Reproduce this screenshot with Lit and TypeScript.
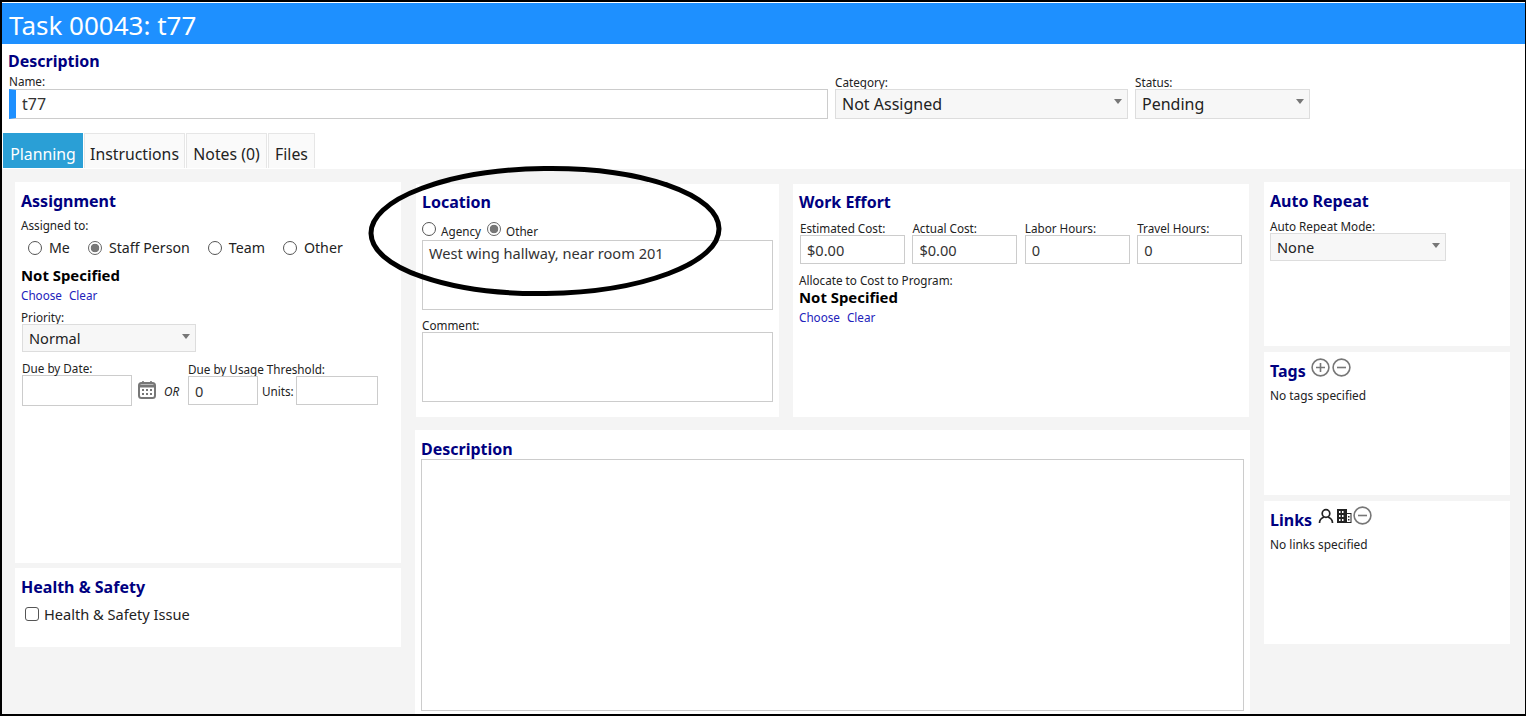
import { css, html, LitElement, svg } from 'lit';
import { customElement } from 'lit/decorators.js';

const plusIcon = svg`<circle cx="9.5" cy="9.5" r="8.4" fill="none" stroke="#777" stroke-width="1.6"/><path d="M5 9.5h9M9.5 5v9" stroke="#777" stroke-width="1.6"/>`;
const minusIcon = svg`<circle cx="9.5" cy="9.5" r="8.4" fill="none" stroke="#777" stroke-width="1.6"/><path d="M5 9.5h9" stroke="#777" stroke-width="1.6"/>`;

@customElement('app-root')
export class AppRoot extends LitElement {
  static styles = css`
    :host {
      display: block;
      font-family: 'Noto Sans', 'Open Sans', sans-serif;
      color: #222;
    }

    * {
      box-sizing: border-box;
    }

    .frame {
      position: relative;
      display: flex;
      flex-direction: column;
      width: 1526px;
      height: 716px;
      overflow: hidden;
      border: solid #000;
      border-width: 2px 1px 2px 2px;
      padding-top: 1px;
      background: #fff;
    }

    .title {
      flex: none;
      height: 41px;
      padding-left: 7px;
      background: #1e90ff;
      color: #fff;
      font-size: 26px;
      line-height: 44px;
    }

    h2 {
      margin: 0;
      color: #000080;
      font-size: 16px;
      font-weight: 700;
      line-height: 22px;
    }

    label {
      display: block;
      font-size: 11.7px;
      line-height: 14px;
    }

    .top {
      flex: none;
      height: 89px;
      padding: 6px 0 0 6px;
    }

    .top-row {
      display: flex;
      margin-top: 3px;
    }

    .top-row > div {
      margin-right: 7px;
    }

    .name {
      padding-left: 1px;
    }

    .name label {
      margin: -1px 0 1px;
    }

    .name input[type='text'] {
      width: 819px;
      border-left: 7px solid #1e90ff;
      padding-left: 6px;
      font-size: 16px;
    }

    .category .select {
      width: 293px;
    }

    .status .select {
      width: 175px;
    }

    .top-row .select {
      font-size: 16px;
    }

    input[type='text'],
    textarea {
      display: block;
      height: 30px;
      border: 1px solid #ccc;
      border-radius: 0;
      outline: none;
      padding: 0 6px;
      background: #fff;
      color: #333;
      font: inherit;
      font-size: 14.6px;
    }

    textarea {
      width: 100%;
      height: 70px;
      resize: none;
      line-height: 20px;
      padding-top: 2px;
    }

    .select {
      position: relative;
      height: 30px;
      border: 1px solid #ddd;
      padding-left: 6px;
      background: #f7f7f7;
      font-size: 14.6px;
      line-height: 28px;
    }

    .select.short {
      height: 28px;
      line-height: 26px;
    }

    .select::after {
      content: '';
      position: absolute;
      top: 9px;
      right: 5px;
      border: 4px solid transparent;
      border-top: 5px solid #777;
      border-bottom: 0;
    }

    .tabs {
      flex: none;
      display: flex;
      gap: 1px;
      height: 36px;
      padding: 0 0 1px 1px;
    }

    .tab {
      height: 35px;
      border: 1px solid #e6e6e6;
      border-bottom: 0;
      background: #fafafa;
      font-size: 15.8px;
      line-height: 41px;
      text-align: center;
    }

    .tab:nth-child(1) {
      width: 80px;
    }

    .tab:nth-child(2) {
      width: 101px;
    }

    .tab:nth-child(3) {
      width: 81px;
    }

    .tab:nth-child(4) {
      width: 47px;
    }

    .tab.active {
      border-color: #2a9fd6;
      background: #2a9fd6;
      color: #fff;
    }

    .main {
      flex: 1;
      display: grid;
      grid-template-columns: 386px 835px 246px;
      column-gap: 14px;
      padding: 13px 0 0 13px;
      background: #f4f4f4;
      min-height: 0;
    }

    .col {
      display: flex;
      flex-direction: column;
    }

    .panel {
      background: #fff;
      padding: 8px 6px;
    }

    .assignment {
      height: 381px;
    }

    .assigned-label {
      margin-top: 6px;
    }

    .health {
      height: 79px;
      margin-top: 5px;
    }

    .health .option {
      gap: 5px;
      margin: 6px 0 0 4px;
      font-size: 14.6px;
    }

    .middle {
      padding-top: 2px;
    }

    .middle-top {
      display: grid;
      grid-template-columns: 363px 456px;
      column-gap: 14px;
      margin-left: 1px;
    }

    .location,
    .effort {
      height: 233px;
      padding: 7px 6px;
    }

    .description {
      height: 292px;
      margin-top: 13px;
      padding: 8px 6px;
    }

    .description h2 {
      margin-bottom: -1px;
    }

    .description textarea {
      height: 252px;
    }

    .repeat {
      height: 164px;
    }

    .repeat label {
      margin-top: 7px;
    }

    .repeat .select {
      width: 176px;
    }

    .tags,
    .links {
      height: 143px;
      margin-top: 6px;
    }

    .options {
      display: flex;
      align-items: center;
      height: 22px;
      margin-top: 5px;
    }

    .option {
      display: flex;
      align-items: center;
      gap: 7px;
      margin: 0 18px 0 7px;
      font-size: 14.2px;
      line-height: 20px;
    }

    .option + .option {
      margin-left: 0;
    }

    input[type='radio'],
    input[type='checkbox'] {
      appearance: none;
      flex: none;
      width: 14px;
      height: 14px;
      margin: 0;
      border: 1px solid #555;
      border-radius: 50%;
      background: #fff;
    }

    input[type='radio']:checked {
      border-color: #666;
      background: radial-gradient(circle, #777 0 4px, #fff 4.6px);
    }

    input[type='checkbox'] {
      border-radius: 3px;
    }

    .loc-options {
      display: flex;
      align-items: center;
      gap: 5px;
      height: 16px;
      margin: 8px 0 3px;
    }

    .loc-options span {
      position: relative;
      top: 2px;
      margin-right: 1px;
      font-size: 11.7px;
    }

    .comment-label {
      margin-top: 8px;
    }

    .strong {
      color: #000;
      font-size: 14.9px;
      font-weight: 700;
      line-height: 20px;
    }

    .assignment .strong {
      margin-top: 6px;
    }

    .links-row {
      display: flex;
      gap: 7px;
      margin-top: 2px;
      color: #2222bb;
      font-size: 11.7px;
      line-height: 16px;
    }

    .priority-label {
      margin-top: 7px;
    }

    .priority {
      width: 174px;
      margin-left: 1px;
    }

    .fields {
      display: grid;
      grid-template-columns: repeat(4, 105px);
      column-gap: 7.4px;
      margin: 8px 0 0 1px;
    }

    .fields input[type='text'] {
      width: 100%;
      height: 29px;
    }

    .allocate-label {
      margin-top: 9px;
    }

    .due {
      display: flex;
      align-items: flex-end;
      margin: 9px 0 0 1px;
    }

    .date input[type='text'] {
      width: 110px;
      height: 31px;
    }

    .calendar {
      flex: none;
      width: 18px;
      height: 18px;
      margin: 0 8px 7px 6px;
    }

    .or {
      width: 24px;
      font-size: 11.7px;
      font-style: italic;
      line-height: 30px;
    }

    .usage {
      margin-bottom: 1px;
    }

    .units {
      display: flex;
      align-items: center;
      gap: 3px;
      font-size: 11.7px;
    }

    .units span {
      margin-right: -1px;
    }

    .units input[type='text'] {
      width: 82px;
      height: 29px;
    }

    .units input.threshold[type='text'] {
      width: 70px;
      margin-right: 1px;
    }

    .head-icons {
      display: flex;
      align-items: flex-start;
      gap: 2px;
    }

    .head-icons h2 {
      margin-right: 3px;
    }

    .head-icons svg {
      display: block;
      margin-top: -2px;
    }

    .links .head-icons h2 {
      margin-right: 4px;
    }

    .links .head-icons svg {
      margin-top: -1px;
    }

    .links .head-icons svg.minus {
      margin: -3px 0 0 -1px;
    }

    .note {
      margin-top: 5px;
      font-size: 11.9px;
      line-height: 16px;
    }

    .circle {
      position: absolute;
      left: 366px;
      top: 161px;
      width: 360px;
      height: 136px;
      overflow: visible;
      pointer-events: none;
    }
  `;

  render() {
    return html`
      <div class="frame">
        <div class="title">Task 00043: t77</div>
        <section class="top">
          <h2>Description</h2>
          <div class="top-row">
            <div class="name">
              <label>Name:</label>
              <input type="text" .value=${'t77'} />
            </div>
            <div class="category">
              <label>Category:</label>
              <div class="select">Not Assigned</div>
            </div>
            <div class="status">
              <label>Status:</label>
              <div class="select">Pending</div>
            </div>
          </div>
        </section>
        <nav class="tabs">
          <div class="tab active">Planning</div>
          <div class="tab">Instructions</div>
          <div class="tab">Notes (0)</div>
          <div class="tab">Files</div>
        </nav>
        <main class="main">
          <div class="col">
            <section class="panel assignment">
              <h2>Assignment</h2>
              <label class="assigned-label">Assigned to:</label>
              <div class="options">
                <div class="option"><input type="radio" />Me</div>
                <div class="option"><input type="radio" checked />Staff Person</div>
                <div class="option"><input type="radio" />Team</div>
                <div class="option"><input type="radio" />Other</div>
              </div>
              <div class="strong">Not Specified</div>
              <div class="links-row"><span>Choose</span><span>Clear</span></div>
              <label class="priority-label">Priority:</label>
              <div class="select short priority">Normal</div>
              <div class="due">
                <div class="date">
                  <label>Due by Date:</label>
                  <input type="text" />
                </div>
                <svg class="calendar" viewBox="0 0 18 18">
                  <rect x="1" y="2" width="16" height="15" rx="2.5" fill="none" stroke="#777" stroke-width="2" />
                  <path d="M1 5h16" stroke="#777" stroke-width="3" />
                  <path d="M5 0v3M13 0v3" stroke="#777" stroke-width="1.6" />
                  <path
                    d="M4 8h2v2H4zM8 8h2v2H8zM12 8h2v2h-2zM4 12h2v2H4zM8 12h2v2H8zM12 12h2v2h-2z"
                    fill="#777"
                  />
                </svg>
                <div class="or">OR</div>
                <div class="usage">
                  <label>Due by Usage Threshold:</label>
                  <div class="units">
                    <input class="threshold" type="text" .value=${'0'} />
                    <span>Units:</span>
                    <input type="text" />
                  </div>
                </div>
              </div>
            </section>
            <section class="panel health">
              <h2>Health &amp; Safety</h2>
              <div class="option"><input type="checkbox" />Health &amp; Safety Issue</div>
            </section>
          </div>
          <div class="col middle">
            <div class="middle-top">
              <section class="panel location">
                <h2>Location</h2>
                <div class="loc-options">
                  <input type="radio" /><span>Agency</span>
                  <input type="radio" checked /><span>Other</span>
                </div>
                <textarea .value=${'West wing hallway, near room 201'}></textarea>
                <label class="comment-label">Comment:</label>
                <textarea></textarea>
              </section>
              <section class="panel effort">
                <h2>Work Effort</h2>
                <div class="fields">
                  <div><label>Estimated Cost:</label><input type="text" .value=${'$0.00'} /></div>
                  <div><label>Actual Cost:</label><input type="text" .value=${'$0.00'} /></div>
                  <div><label>Labor Hours:</label><input type="text" .value=${'0'} /></div>
                  <div><label>Travel Hours:</label><input type="text" .value=${'0'} /></div>
                </div>
                <label class="allocate-label">Allocate to Cost to Program:</label>
                <div class="strong">Not Specified</div>
                <div class="links-row"><span>Choose</span><span>Clear</span></div>
              </section>
            </div>
            <section class="panel description">
              <h2>Description</h2>
              <textarea></textarea>
            </section>
          </div>
          <div class="col">
            <section class="panel repeat">
              <h2>Auto Repeat</h2>
              <label>Auto Repeat Mode:</label>
              <div class="select short">None</div>
            </section>
            <section class="panel tags">
              <div class="head-icons">
                <h2>Tags</h2>
                <svg width="19" height="19" viewBox="0 0 19 19">${plusIcon}</svg>
                <svg width="19" height="19" viewBox="0 0 19 19">${minusIcon}</svg>
              </div>
              <div class="note">No tags specified</div>
            </section>
            <section class="panel links">
              <div class="head-icons">
                <h2>Links</h2>
                <svg width="16" height="16" viewBox="0 0 16 16">
                  <circle cx="8" cy="5.5" r="3.8" fill="none" stroke="#222" stroke-width="1.7" />
                  <path d="M1.5 15c0-3 2-5 4.5-6M14.5 15c0-3-2-5-4.5-6" fill="none" stroke="#222" stroke-width="1.7" />
                </svg>
                <svg width="16" height="16" viewBox="0 0 16 16">
                  <path
                    fill="#222"
                    fill-rule="evenodd"
                    d="M1 1h10v14H1zM3 3v2h1.500V3zm3 0v2h1.500V3zM3 7v2h1.500V7zm3 0v2h1.500V7zM3 11v2h1.500v-2zm3 0v2h1.500v-2z"
                  />
                  <path fill="#222" d="M11 5h4.500v10H11v-1h3.500V6H11z" />
                  <path fill="#222" d="M12 8h1.500v1.500H12zM12 11h1.500v1.500H12z" />
                </svg>
                <svg class="minus" width="19" height="19" viewBox="0 0 19 19">${minusIcon}</svg>
              </div>
              <div class="note">No links specified</div>
            </section>
          </div>
        </main>
        <svg class="circle" viewBox="0 0 360 136">
          <ellipse
            cx="177"
            cy="68"
            rx="174"
            ry="62.500"
            fill="none"
            stroke="#000"
            stroke-width="5"
            transform="rotate(-0.8 177 68)"
          />
        </svg>
      </div>
    `;
  }
}
